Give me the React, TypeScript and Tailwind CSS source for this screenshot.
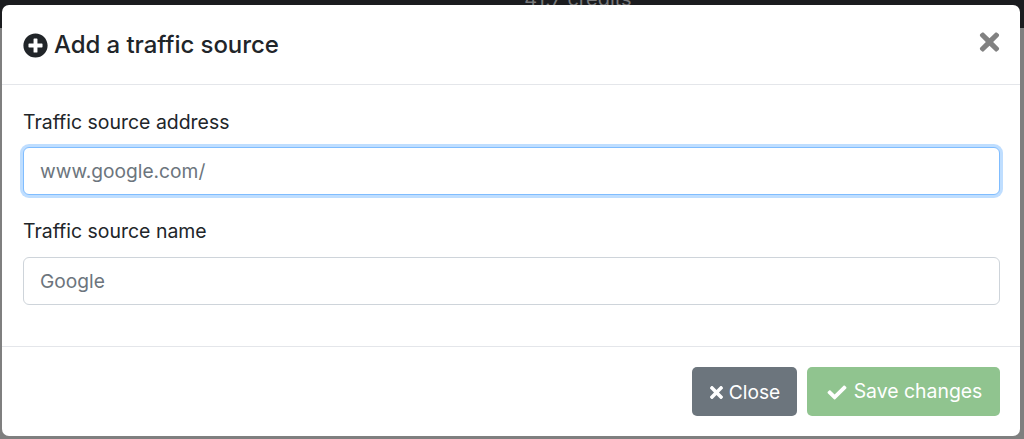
import { FaCheck, FaPlusCircle, FaTimes } from 'react-icons/fa';

const font = "font-['Inter','Liberation_Sans',sans-serif]";

function Field({ label, value, focused }: { label: string; value: string; focused?: boolean }) {
  return (
    <div className="flex flex-col [&:first-child>label]:mb-[11px] [&:first-child>label]:pt-[1px]">
      <label className="mb-[12px] text-[19.45px] leading-[27px] text-[#212529]">{label}</label>
      <input
        readOnly
        placeholder={value}
        className={`h-[48px] w-full rounded-[6px] border bg-white px-[16px] text-[19.2px] outline-none placeholder:text-[#6c757d] ${
          focused
            ? 'border-[#80bdff] shadow-[0_0_0_3px_rgba(0,123,255,0.25)]'
            : 'border-[#ced4da]'
        }`}
      />
    </div>
  );
}

export default function App() {
  return (
    <div className={`relative h-[439px] w-[1024px] overflow-hidden bg-[#7f7f7f] pt-[5px] pl-[2px] ${font}`}>
      {/* page behind the backdrop */}
      <div className="absolute inset-x-0 top-0 flex h-[28px] items-start justify-center bg-[#1b1c1f] pl-[132px]">
        <span className="mt-[-14px] text-[20px] leading-[27px] text-[#77787a]">41.7 credits</span>
      </div>

      {/* modal */}
      <div className="relative flex h-[431px] w-[1018px] flex-col rounded-[7px] bg-white">
        <div className="flex h-[80px] items-start justify-between border-b border-[#e4e6ea] pr-[20px] pl-[21px]">
          <h4 className="mt-[24px] flex items-center gap-[6px] text-[24px] font-medium leading-[32px] tracking-[-0.07px] text-[#212529]">
            <FaPlusCircle className="h-[25px] w-[25px]" />
            Add a traffic source
          </h4>
          <FaTimes className="mt-[23px] h-[28px] w-[21px] text-[#818181]" />
        </div>

        <div className="flex h-[261px] flex-col gap-[23px] pr-[20px] pl-[21px] pt-[23px]">
          <Field label="Traffic source address" value="www.google.com/" focused />
          <Field label="Traffic source name" value="Google" />
        </div>

        <div className="flex h-[90px] items-start justify-end gap-[10px] border-t border-[#e4e6ea] pt-[20px] pr-[20px]">
          <button className="flex h-[49px] w-[105px] items-center justify-center gap-[5px] rounded-[5px] bg-[#6c757d] pt-[1px] text-[19.2px] text-white">
            <FaTimes className="h-[19px] w-[15px]" />
            Close
          </button>
          <button className="flex h-[49px] w-[193px] items-center justify-center gap-[6px] rounded-[5px] bg-[#90c48f] pt-[1px] pl-[1px] text-[19.4px] text-white">
            <FaCheck className="h-[19px] w-[22px]" />
            Save changes
          </button>
        </div>
      </div>
    </div>
  );
}
